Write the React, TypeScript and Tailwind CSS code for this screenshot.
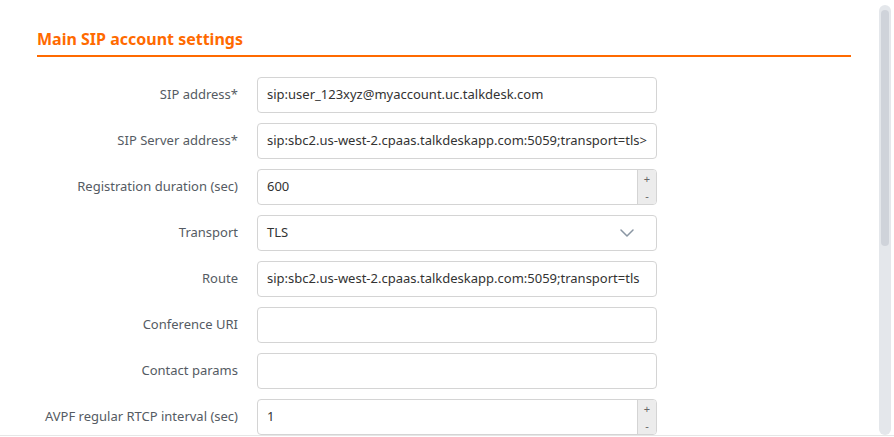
import React from "react";

type Field = {
  label: string;
  value: string;
  kind?: "text" | "number" | "select";
};

const fields: Field[] = [
  { label: "SIP address*", value: "sip:user_123xyz@myaccount.uc.talkdesk.com" },
  { label: "SIP Server address*", value: "sip:sbc2.us-west-2.cpaas.talkdeskapp.com:5059;transport=tls>" },
  { label: "Registration duration (sec)", value: "600", kind: "number" },
  { label: "Transport", value: "TLS", kind: "select" },
  { label: "Route", value: "sip:sbc2.us-west-2.cpaas.talkdeskapp.com:5059;transport=tls" },
  { label: "Conference URI", value: "" },
  { label: "Contact params", value: "" },
  { label: "AVPF regular RTCP interval (sec)", value: "1", kind: "number" },
];

function Control({ field }: { field: Field }) {
  if (field.kind === "number") {
    return (
      <div className="flex h-[36px] w-[400px] overflow-hidden rounded-[4px] border border-[#d4d4d4] bg-white">
        <div className="flex flex-1 items-center pl-[9px] text-[13px] text-[#333]">{field.value}</div>
        <div className="flex w-[19px] flex-col border-l border-[#d4d4d4] bg-[#ececec] text-[11px] leading-none text-[#666]">
          <span className="flex flex-1 items-center justify-center">+</span>
          <span className="flex flex-1 items-center justify-center">-</span>
        </div>
      </div>
    );
  }
  if (field.kind === "select") {
    return (
      <div className="flex h-[36px] w-[400px] items-center justify-between rounded-[4px] border border-[#d4d4d4] bg-white pl-[9px] pr-[22px] text-[13px] text-[#333]">
        <span>{field.value}</span>
        <svg width="14" height="8" viewBox="0 0 14 8" fill="none">
          <path d="M1 1l6 6 6-6" stroke="#8a96a3" strokeWidth="1.5" strokeLinecap="round" strokeLinejoin="round" />
        </svg>
      </div>
    );
  }
  return (
    <div className="flex h-[36px] w-[400px] items-center whitespace-nowrap overflow-hidden rounded-[4px] border border-[#d4d4d4] bg-white pl-[9px] text-[13px] text-[#333]">
      {field.value}
    </div>
  );
}

export default function App() {
  return (
    <div
      className="relative h-[437px] w-[894px] overflow-hidden bg-white"
      style={{ fontFamily: '"Noto Sans", "Open Sans", sans-serif' }}
    >
      <div className="h-[436px] border-b border-[#e6e6e6] pl-[37px] pt-[28px]">
        <div className="w-[814px] border-b-2 border-[#ff6a00] pb-[5px]">
          <h2 className="text-[16px] font-bold leading-[22px] text-[#ff6a00]">Main SIP account settings</h2>
        </div>
        <div className="mt-[20px] flex flex-col gap-[10px]">
          {fields.map((f) => (
            <div key={f.label} className="flex items-center gap-[19px]">
              <div className="w-[201px] text-right text-[13px] text-[#555b63]">{f.label}</div>
              <Control field={f} />
            </div>
          ))}
        </div>
      </div>
      {/* scrollbar */}
      <div className="absolute left-[879px] top-[5px] h-[430px] w-[12px] rounded-full bg-[#e4e7eb] p-[2px]">
        <div className="h-[236px] w-[8px] rounded-full bg-[#cfd3da]" style={{ marginTop: 3 }} />
      </div>
    </div>
  );
}
